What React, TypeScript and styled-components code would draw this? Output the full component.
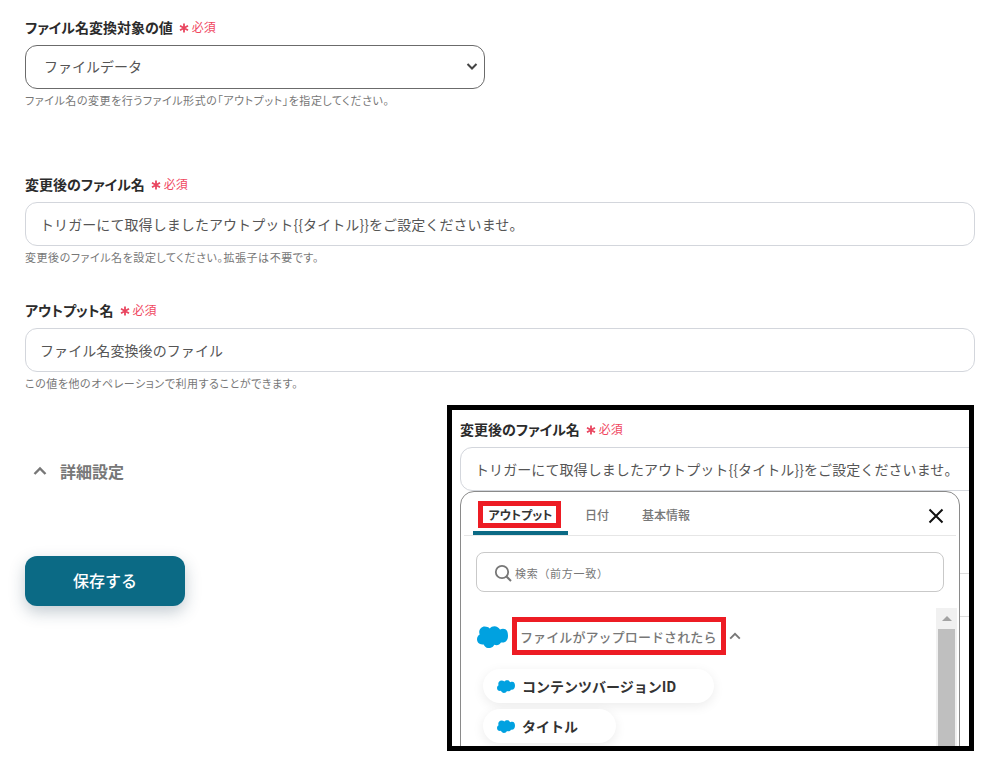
import React from "react";
import styled, { createGlobalStyle } from "styled-components";

const Global = createGlobalStyle`
  html, body { margin: 0; padding: 0; background: #fff; }
  body { font-family: "Noto Sans CJK JP", "Noto Sans", sans-serif; color: #2b2b2b; }
`;

const Page = styled.div`
  position: relative;
  width: 999px;
  height: 773px;
  overflow: hidden;
  box-sizing: border-box;
  padding: 17px 24px 0 25px;
`;

const Field = styled.div<{ $gap: number }>`
  margin-bottom: ${(p) => p.$gap}px;
`;

const Label = styled.div`
  display: flex;
  align-items: center;
  height: 20px;
  font-size: 14px;
  font-weight: 700;
  color: #2b2b2b;
  line-height: 20px;
  font-feature-settings: "palt";
`;

const StarIcon = styled.svg`
  margin: 2px 3px 0 6px;
`;

const Req = styled.span`
  color: #f0485f;
  font-size: 12px;
  font-weight: 400;
`;

const SelectBox = styled.div`
  box-sizing: border-box;
  display: flex;
  align-items: center;
  justify-content: space-between;
  width: 460px;
  height: 44px;
  margin-top: 8px;
  padding: 0 6px 2px 18px;
  border: 1px solid #6b6b6b;
  border-radius: 12px;
  font-size: 14px;
  color: #555;
`;

const TextInput = styled.div`
  box-sizing: border-box;
  display: flex;
  align-items: center;
  width: 950px;
  height: 44px;
  margin-top: 8px;
  padding: 0 14px;
  border: 1px solid #d3d6dc;
  border-radius: 12px;
  font-size: 14px;
  letter-spacing: 0.08px;
  color: #555;
  white-space: nowrap;
`;

const Help = styled.div`
  margin-top: 4px;
  font-size: 11px;
  line-height: 15px;
  letter-spacing: 0.55px;
  color: #777;
  font-feature-settings: "palt";
`;

const Details = styled.div`
  display: flex;
  align-items: center;
  gap: 12px;
  margin-left: 7px;
  height: 24px;
  font-size: 16px;
  font-weight: 700;
  color: #777;
`;

const SaveButton = styled.button`
  display: block;
  width: 160px;
  height: 50px;
  margin-top: 73px;
  padding: 0 0 2px;
  border: 0;
  border-radius: 12px;
  background: #0b6a85;
  color: #fff;
  font-family: inherit;
  font-size: 16px;
  font-weight: 500;
  box-shadow: 0 6px 16px rgba(40, 70, 90, 0.28);
`;

const Frame = styled.div`
  position: absolute;
  left: 447px;
  top: 405px;
  width: 527px;
  height: 346px;
  box-sizing: border-box;
  border: 5px solid #000;
  background: #fff;
  overflow: hidden;
  padding: 9px 0 0 8px;
`;

const FrameInput = styled(TextInput)`
  width: 540px;
  margin-top: 8px;
`;

const Panel = styled.div`
  position: relative;
  box-sizing: border-box;
  width: 500px;
  height: 300px;
  background: #fff;
  border: 1px solid #8a8a8a;
  border-radius: 14px 14px 0 0;
  padding: 0 3px;
`;

const GhostLine = styled.div<{ $top: number }>`
  position: absolute;
  left: 508px;
  top: ${(p) => p.$top}px;
  width: 12px;
  height: 1px;
  background: #dcdcdc;
`;

const Tabs = styled.div`
  display: flex;
  align-items: flex-end;
  height: 43px;
  border-bottom: 1px solid #e6e6e6;
  position: relative;
`;

const Tab = styled.div<{ $w: number; $active?: boolean }>`
  position: relative;
  box-sizing: border-box;
  width: ${(p) => p.$w}px;
  height: 43px;
  padding-top: 14px;
  text-align: center;
  font-size: 12px;
  line-height: 18px;
  font-feature-settings: ${(p) => (p.$active ? '"palt"' : "normal")};
  font-weight: ${(p) => (p.$active ? 700 : 500)};
  color: ${(p) => (p.$active ? "#333" : "#777")};
  border-bottom: ${(p) => (p.$active ? "4px solid #0b6a85" : "0")};
  border-radius: ${(p) => (p.$active ? "3px 3px 0 0" : "0")};
  margin-left: ${(p) => (p.$active ? "9px" : "0")};
`;

const RedBox = styled.div<{ $l: number; $t: number; $w: number; $h: number }>`
  position: absolute;
  left: ${(p) => p.$l}px;
  top: ${(p) => p.$t}px;
  width: ${(p) => p.$w}px;
  height: ${(p) => p.$h}px;
  box-sizing: border-box;
  border: 5px solid #ed1c24;
  pointer-events: none;
`;

const Close = styled.button`
  position: absolute;
  top: 15px;
  right: 14px;
  padding: 0;
  border: 0;
  background: none;
  display: flex;
`;

const Search = styled.div`
  box-sizing: border-box;
  display: flex;
  align-items: center;
  gap: 2px;
  width: 468px;
  height: 40px;
  margin: 16px 0 0 12px;
  padding-left: 16px;
  padding-top: 1px;
  border: 1px solid #c9c9c9;
  border-radius: 8px;
  font-size: 11px;
  letter-spacing: 0.7px;
  color: #777;
`;

const Body = styled.div`
  position: relative;
  padding: 25px 0 0 13px;
`;

const Group = styled.div`
  display: flex;
  align-items: center;
  height: 37px;
  padding-top: 1px;
  box-sizing: border-box;
  font-size: 13px;
  letter-spacing: 0.1px;
  font-weight: 500;
  color: #777;
`;

const GroupTitle = styled.span`
  margin-left: 12px;
  margin-right: 6px;
  width: 202px;
  white-space: nowrap;
`;

const Chip = styled.div<{ $w: number }>`
  display: flex;
  align-items: center;
  gap: 7px;
  box-sizing: border-box;
  width: ${(p) => p.$w}px;
  height: 34px;
  margin: 0 0 6px 6px;
  padding-left: 14px;
  border-radius: 17px;
  background: #fff;
  box-shadow: 0 3px 12px rgba(0, 0, 0, 0.08);
  font-size: 14px;
  font-weight: 700;
  color: #333;
`;

const Chips = styled.div`
  margin-top: 15px;
`;

const Scrollbar = styled.div`
  position: absolute;
  top: 116px;
  right: 2px;
  width: 21px;
  height: 190px;
  background: #f1f1f1;
`;

const ScrollArrow = styled.div`
  width: 0;
  margin: 8px auto 0;
  border-left: 5px solid transparent;
  border-right: 5px solid transparent;
  border-bottom: 5px solid #a3a3a3;
`;

const ScrollThumb = styled.div`
  width: 17px;
  height: 170px;
  margin: 8px auto 0;
  background: #bfbfbf;
`;

const Cloud = ({ w }: { w: number }) => (
  <svg width={w} height={(w * 24) / 31} viewBox="0 0 31 24" aria-hidden="true">
    <path
      fill="#00a1e0"
      d="M12.8 4.4C13.9 3 15.6 2.2 17.4 2.2c2.4 0 4.5 1.3 5.6 3.3 1-.4 2-.7 3-.7 3.900 0 5 3.100 5 6.900s-1.700 6.900-5.600 6.900c-.5 0-1 0-1.400-.1-.9 1.600-2.600 2.700-4.500 2.700-.8 0-1.600-.2-2.300-.5-.9 2-2.900 3.400-5.200 3.400-2.400 0-4.500-1.500-5.300-3.700-.4.1-.7.1-1.100.1C2.400 20.700 0 18.300 0 15.300c0-2 1.100-3.800 2.700-4.700-.3-.8-.5-1.600-.5-2.500C2.200 5.100 4.700 2.600 7.700 2.600c1.900 0 3.800.7 5.100 1.800z"
    />
  </svg>
);

const Chevron = ({ size, color, sw }: { size: number; color: string; sw: number }) => (
  <svg width={size} height={size} viewBox="0 0 16 16" fill="none" aria-hidden="true">
    <path d="M2.500 11 8 5.500 13.500 11" stroke={color} strokeWidth={sw} />
  </svg>
);

const SelectArrow = () => (
  <svg width="12" height="12" viewBox="0 0 12 12" fill="none" aria-hidden="true">
    <path d="M1.500 4 6 8.500 10.500 4" stroke="#444" strokeWidth="2" />
  </svg>
);

const Required = () => (
  <>
    <StarIcon width="10" height="10" viewBox="0 0 10 10" fill="none" aria-hidden="true">
      <path d="M5 .5v9M1 2.700l8 4.600M9 2.700 1 7.300" stroke="#e9455f" strokeWidth="1.800" />
    </StarIcon>
    <Req>必須</Req>
  </>
);

export default function App() {
  return (
    <Page>
      <Global />
      <Field $gap={66}>
        <Label>
          ファイル名変換対象の値
          <Required />
        </Label>
        <SelectBox>
          ファイルデータ
          <SelectArrow />
        </SelectBox>
        <Help>ファイル名の変更を行うファイル形式の「アウトプット」を指定してください。</Help>
      </Field>
      <Field $gap={35}>
        <Label>
          変更後のファイル名
          <Required />
        </Label>
        <TextInput>トリガーにて取得しましたアウトプット{"{{タイトル}}"}をご設定くださいませ。</TextInput>
        <Help>変更後のファイル名を設定してください。拡張子は不要です。</Help>
      </Field>
      <Field $gap={68}>
        <Label>
          アウトプット名
          <Required />
        </Label>
        <TextInput>ファイル名変換後のファイル</TextInput>
        <Help>この値を他のオペレーションで利用することができます。</Help>
      </Field>
      <Details>
        <Chevron size={16} color="#777" sw={2.4} />
        詳細設定
      </Details>
      <SaveButton>保存する</SaveButton>

      <Frame>
        <Label>
          変更後のファイル名
          <Required />
        </Label>
        <FrameInput>トリガーにて取得しましたアウトプット{"{{タイトル}}"}をご設定くださいませ。</FrameInput>
        <GhostLine $top={163} />
        <GhostLine $top={206} />
        <Panel>
          <Tabs>
            <Tab $w={95} $active>
              アウトプット
            </Tab>
            <Tab $w={58}>日付</Tab>
            <Tab $w={80}>基本情報</Tab>
          </Tabs>
          <RedBox $l={17} $t={9} $w={83} $h={27} />
          <Close aria-label="閉じる">
            <svg width="18" height="18" viewBox="0 0 18 18" fill="none" aria-hidden="true">
              <path d="M2.500 2.500 15.500 15.500M15.500 2.500 2.500 15.500" stroke="#111" strokeWidth="2" />
            </svg>
          </Close>
          <Search>
            <svg width="20" height="20" viewBox="0 0 20 20" fill="none" aria-hidden="true">
              <circle cx="9" cy="9" r="6.200" stroke="#777" strokeWidth="1.800" />
              <path d="m13.500 13.500 4.500 4.500" stroke="#777" strokeWidth="2" />
            </svg>
            検索（前方一致）
          </Search>
          <Body>
            <Group>
              <Cloud w={31} />
              <GroupTitle>ファイルがアップロードされたら</GroupTitle>
              <Chevron size={14} color="#777" sw={2.2} />
            </Group>
            <Chips>
              <Chip $w={231}>
                <Cloud w={18} />
                コンテンツバージョンID
              </Chip>
              <Chip $w={133}>
                <Cloud w={18} />
                タイトル
              </Chip>
            </Chips>
          </Body>
          <RedBox $l={51} $t={125} $w={214} $h={38} />
          <Scrollbar>
            <ScrollArrow />
            <ScrollThumb />
          </Scrollbar>
        </Panel>
      </Frame>
    </Page>
  );
}
